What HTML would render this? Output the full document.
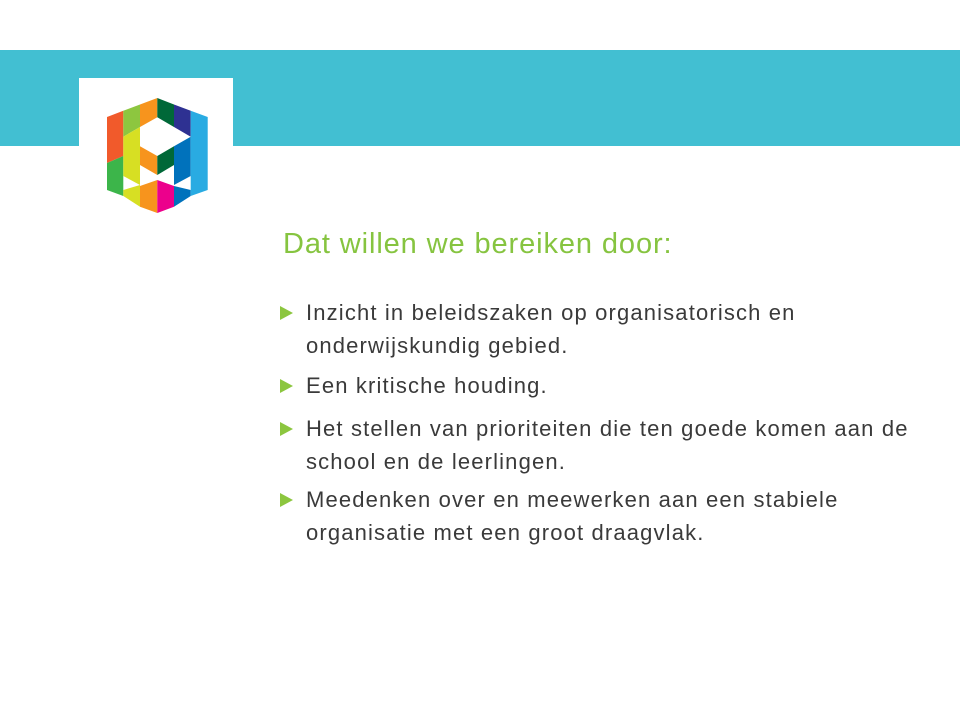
<!DOCTYPE html>
<html><head><meta charset="utf-8"><style>
html,body{margin:0;padding:0;background:#fff;}
body{width:960px;height:720px;position:relative;overflow:hidden;font-family:"Liberation Sans",sans-serif;}
.band{position:absolute;left:0;top:50px;width:960px;height:96px;background:#42bfd2;}
.box{position:absolute;left:79px;top:78px;width:154px;height:152px;background:#fff;}
.title{position:absolute;left:283px;top:228px;font-size:29px;color:#86c440;white-space:nowrap;letter-spacing:0.9px;}
.l{position:absolute;left:306px;font-size:22px;color:#3a3a3a;white-space:nowrap;letter-spacing:1.15px;}
.tri{position:absolute;left:280px;width:0;height:0;border-left:13px solid #8cc63f;border-top:7.5px solid transparent;border-bottom:7.5px solid transparent;}
</style></head><body>
<div class="band"></div>
<div class="box"></div>
<svg style="position:absolute;left:0;top:0" width="960" height="720">
<polygon points="107,117 123.3,110.8 123.3,156 107,163" fill="#f15a2b"/>
<polygon points="107,163 123.3,156 123.3,196 107,190" fill="#3cb54a"/>
<polygon points="123.3,110.8 140,104.5 140,127 123.3,136.7" fill="#8dc63f"/>
<polygon points="123.3,136.7 140,127 140,185 123.3,176" fill="#d7df23"/>
<polygon points="123.3,190 140,185 140,206.7 123.3,196" fill="#d7df23"/>
<polygon points="140,104.5 157.3,98 157.3,117.3 140,127" fill="#f7941d"/>
<polygon points="140,146.3 157.3,156 157.3,175 140,165" fill="#f7941d"/>
<polygon points="140,186 157.3,180 157.3,213 140,206.7" fill="#f7941d"/>
<polygon points="157.3,98 174,104.5 174,127 157.3,117.3" fill="#006838"/>
<polygon points="157.3,156 174,146.3 174,165 157.3,175" fill="#006838"/>
<polygon points="157.3,180 174,186 174,206.7 157.3,213" fill="#ec008c"/>
<polygon points="174,104.5 190.7,110.8 190.7,136.7 174,127" fill="#2e3192"/>
<polygon points="174,146.3 190.7,136.7 190.7,176 174,185" fill="#0072bc"/>
<polygon points="174,186 190.7,190 190.7,196 174,206.7" fill="#0072bc"/>
<polygon points="190.7,110.8 207.7,117 207.7,190 190.7,196" fill="#29abe2"/>
</svg>
<div class="title">Dat willen we bereiken door:</div>
<div class="tri" style="top:306px"></div>
<div class="l" style="top:300px">Inzicht in beleidszaken op organisatorisch en</div>
<div class="l" style="top:333px">onderwijskundig gebied.</div>
<div class="tri" style="top:379px"></div>
<div class="l" style="top:373px">Een kritische houding.</div>
<div class="tri" style="top:422px"></div>
<div class="l" style="top:416px">Het stellen van prioriteiten die ten goede komen aan de</div>
<div class="l" style="top:449px">school en de leerlingen.</div>
<div class="tri" style="top:493px"></div>
<div class="l" style="top:487px">Meedenken over en meewerken aan een stabiele</div>
<div class="l" style="top:520px">organisatie met een groot draagvlak.</div>
</body></html>
